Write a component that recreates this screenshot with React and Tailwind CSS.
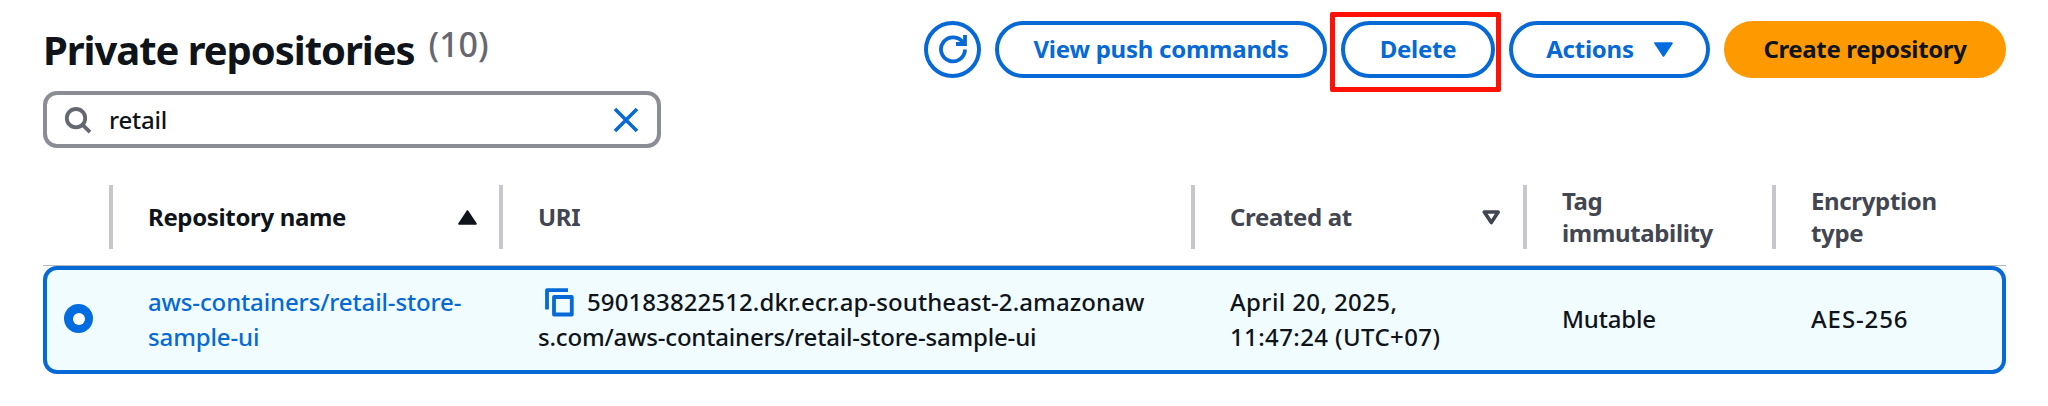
import React from 'react';

const outline =
  'flex h-[57px] shrink-0 items-center justify-center rounded-full border-4 border-[#0669d6] pb-px font-bold tracking-[-0.25px] text-[#0669d6] whitespace-nowrap';

const columns =
  'grid grid-cols-[70px_390px_692px_332px_249px_230px] items-center';

function RefreshIcon() {
  return (
    <svg className="size-[30px]" viewBox="0 0 30 30" fill="none" stroke="#0669d6" strokeWidth="3.8">
      <path d="M27 15.5A12 12 0 1 1 25.2 9" />
      <path d="M27 1V10H18" />
    </svg>
  );
}

function SearchIcon() {
  return (
    <svg className="ml-[17px] size-[28px] shrink-0" viewBox="0 0 28 28" fill="none" stroke="#656871" strokeWidth="3.8">
      <circle cx="12" cy="12.2" r="9.2" />
      <path d="M18.6 18.8L26 26.2" />
    </svg>
  );
}

function ClearIcon() {
  return (
    <svg className="mr-[18px] size-[26px] shrink-0" viewBox="0 0 26 26" fill="none" stroke="#0669d6" strokeWidth="3.6">
      <path d="M2 2L24 24M24 2L2 24" />
    </svg>
  );
}

function CopyIcon() {
  return (
    <svg className="mr-[13px] mb-[3px] ml-[7px] inline-block size-[29px] align-middle" viewBox="0 0 29 29" fill="none" stroke="#0669d6" strokeWidth="3.8" strokeLinejoin="round">
      <path d="M2 21.5V2.2H23" />
      <rect x="9" y="9" width="17.8" height="17.5" />
    </svg>
  );
}

function HeaderCell({ label, icon, last, active }) {
  return (
    <div
      className={
        'flex h-16 items-center justify-between pl-[35px] leading-8 font-bold tracking-[-0.35px] ' +
        (active ? 'text-[#0f141a] ' : 'text-[#424650] ') +
        (last ? '' : 'border-r-4 border-[#c6c6cd]')
      }
    >
      <span>{label}</span>
      {icon}
    </div>
  );
}

export default function App() {
  return (
    <main className="h-[406px] w-[2048px] overflow-hidden bg-white pt-[21px] pl-[43px] font-['Noto_Sans',sans-serif] text-[24px] font-medium text-[#0f141a]">
      <header className="flex h-[57px] w-[1963px] items-center justify-between">
        <h1 className="flex items-center whitespace-nowrap">
          <span className="pt-px text-[40px] font-bold tracking-[-1.05px]">Private repositories</span>
          <span className="ml-[14px] pb-[11px] text-[34px] text-[#656871]">(10)</span>
        </h1>
        <div className="flex items-center">
          <button className={outline + ' w-[57px]'} aria-label="Refresh">
            <RefreshIcon />
          </button>
          <button className={outline + ' ml-[14px] w-[332px]'}>View push commands</button>
          <div className="relative ml-[14px]">
            <button className={outline + ' w-[154px]'}>Delete</button>
            <span className="absolute -top-[9px] -left-[11px] h-[80px] w-[171px] rounded-[2px] border-[5px] border-[#fe1106]" />
          </div>
          <button className={outline + ' ml-[14px] w-[201px]'}>
            Actions
            <svg className="ml-[20px] h-[15px] w-[19px]" viewBox="0 0 19 15" fill="#006ce0" stroke="#006ce0" strokeWidth="2" strokeLinejoin="round">
              <path d="M1.2 1.2H17.8L9.5 13.8Z" />
            </svg>
          </button>
          <button className="ml-[14px] flex h-[57px] w-[282px] items-center justify-center rounded-full bg-[#ff9900] pb-px font-bold tracking-[-0.35px]">
            Create repository
          </button>
        </div>
      </header>

      <div className="mt-[13px] flex h-[57px] w-[618px] items-center rounded-[14px] border-4 border-[#8c8c94]">
        <SearchIcon />
        <span className="ml-[17px] flex-1 pt-px tracking-[-0.2px]">retail</span>
        <ClearIcon />
      </div>

      <section className="mt-[37px] w-[1963px]">
        <div className={columns + ' h-[81px] items-start border-b border-[#b8bac4] pb-4'}>
          <HeaderCell />
          <HeaderCell
            active
            label="Repository name"
            icon={
              <svg className="mr-[22px] h-[15px] w-[19px]" viewBox="0 0 19 15" fill="#0f141a" stroke="#0f141a" strokeWidth="2" strokeLinejoin="round">
                <path d="M1.2 13.8H17.8L9.5 1.2Z" />
              </svg>
            }
          />
          <HeaderCell label="URI" />
          <HeaderCell
            label="Created at"
            icon={
              <svg className="mr-[22px] h-[15px] w-[19px]" viewBox="0 0 19 15" fill="none" stroke="#424650" strokeWidth="3.6" strokeLinejoin="round">
                <path d="M2.3 2H16.2L9.3 12.6Z" />
              </svg>
            }
          />
          <HeaderCell label={<>Tag<br />immutability</>} />
          <HeaderCell last label={<>Encryption<br />type</>} />
        </div>

        <div className="h-[108px] rounded-[14px] border-4 border-[#0669d6] bg-[#f0fcff] pb-[3px] leading-[35px]">
          <div className={columns + ' -mx-1 h-full'}>
            <div className="pl-[21px]">
              <div className="flex size-[29px] items-center justify-center rounded-full bg-[#006ce0]">
                <div className="size-[12px] rounded-full bg-white" />
              </div>
            </div>
            <div className="pl-[35px] tracking-[-0.13px] text-[#0669d6]">
              aws-containers/retail-store-
              <br />
              sample-ui
            </div>
            <div className="pl-[35px] whitespace-nowrap">
              <div className="h-[35px] tracking-[0.09px]">
                <CopyIcon />
                590183822512.dkr.ecr.ap-southeast-2.amazonaw
              </div>
              <div className="h-[35px] tracking-[-0.18px]">s.com/aws-containers/retail-store-sample-ui</div>
            </div>
            <div className="pl-[35px] whitespace-nowrap tracking-[0.38px]">
              April 20, 2025,
              <br />
              11:47:24 (UTC+07)
            </div>
            <div className="pl-[35px] tracking-[-0.2px]">Mutable</div>
            <div className="pl-[35px] tracking-[0.9px]">AES-256</div>
          </div>
        </div>
      </section>
    </main>
  );
}
